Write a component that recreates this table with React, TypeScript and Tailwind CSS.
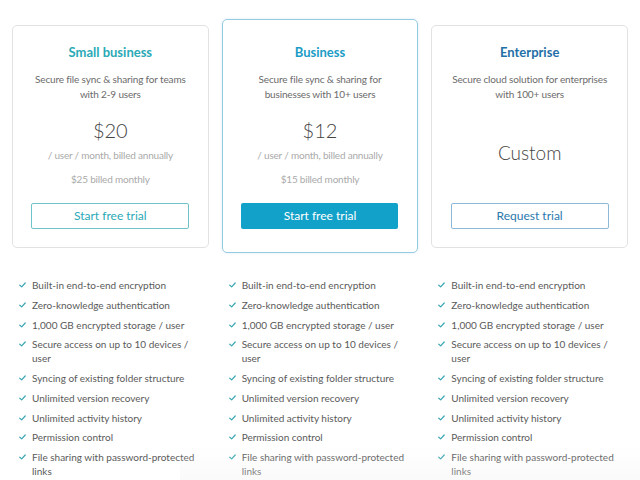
import React from "react";

const features = [
  "Built-in end-to-end encryption",
  "Zero-knowledge authentication",
  "1,000 GB encrypted storage / user",
  "Secure access on up to 10 devices / user",
  "Syncing of existing folder structure",
  "Unlimited version recovery",
  "Unlimited activity history",
  "Permission control",
  "File sharing with password-protected links",
];

function Check() {
  return (
    <svg width="7" height="6" viewBox="0 0 7 6" className="shrink-0 mt-[4px]">
      <path d="M0.8 3.2 L2.7 4.9 L6.2 1" fill="none" stroke="#3aa6b0" strokeWidth="1.2" strokeLinecap="round" strokeLinejoin="round" />
    </svg>
  );
}

function FeatureList() {
  return (
    <ul className="flex flex-col gap-[5.75px] pl-[7px]">
      {features.map((f) => (
        <li key={f} className="flex items-start gap-[6px] text-[10px] leading-[14px] text-[#5a5a5a]">
          <Check />
          <span className="w-[166px]">{f}</span>
        </li>
      ))}
    </ul>
  );
}

export default function App() {
  return (
    <div
      className="relative w-[640px] h-[480px] bg-white overflow-hidden"
      style={{ fontFamily: "Lato, 'Open Sans', sans-serif" }}
    >
      <div className="grid grid-cols-3 gap-[13px] px-[12px] pt-[19px]">
        {/* Small business */}
        <div className="mt-[6px] mb-[5px] border border-[#e2e2e2] rounded-[5px] flex flex-col items-center pt-[18px] pb-[18px] px-[8px]">
          <div className="text-[13px] leading-[16px] font-bold text-[#2aa9b6]">Small business</div>
          <div className="mt-[12px] text-[10px] tracking-[-0.15px] leading-[15px] text-[#6b6b6b] text-center whitespace-nowrap">
            Secure file sync &amp; sharing for teams<br />with 2-9 users
          </div>
          <div className="mt-[16px] text-[20px] leading-[24px] font-light text-[#444]">$20</div>
          <div className="mt-[6px] text-[10px] tracking-[-0.2px] leading-[14px] text-[#aaa] whitespace-nowrap">/ user / month, billed annually</div>
          <div className="mt-[10px] text-[10px] tracking-[-0.2px] leading-[14px] text-[#aaa]">$25 billed monthly</div>
          <button className="mt-[17px] w-[158px] h-[26px] border border-[#71c3cb] rounded-[2px] text-[12px] text-[#2aa9b6]">
            Start free trial
          </button>
        </div>

        {/* Business */}
        <div className="border border-[#93cbe3] rounded-[5px] flex flex-col items-center pt-[24px] pb-[23px] px-[8px] shadow-[0_0_3px_rgba(120,180,210,0.25)]">
          <div className="text-[13px] leading-[16px] font-bold text-[#1a9cc6]">Business</div>
          <div className="mt-[12px] text-[10px] tracking-[-0.15px] leading-[15px] text-[#6b6b6b] text-center whitespace-nowrap">
            Secure file sync &amp; sharing for<br />businesses with 10+ users
          </div>
          <div className="mt-[16px] text-[20px] leading-[24px] font-light text-[#444]">$12</div>
          <div className="mt-[6px] text-[10px] tracking-[-0.2px] leading-[14px] text-[#aaa] whitespace-nowrap">/ user / month, billed annually</div>
          <div className="mt-[10px] text-[10px] tracking-[-0.2px] leading-[14px] text-[#aaa]">$15 billed monthly</div>
          <button className="mt-[17px] w-[157px] h-[26px] bg-[#12a1c9] rounded-[2px] text-[12px] text-white">
            Start free trial
          </button>
        </div>

        {/* Enterprise */}
        <div className="mt-[6px] mb-[5px] border border-[#e2e2e2] rounded-[5px] flex flex-col items-center pt-[18px] pb-[18px] px-[8px]">
          <div className="text-[13px] leading-[16px] font-bold text-[#1f70a8]">Enterprise</div>
          <div className="mt-[12px] text-[10px] tracking-[-0.15px] leading-[15px] text-[#6b6b6b] text-center whitespace-nowrap">
            Secure cloud solution for enterprises<br />with 100+ users
          </div>
          <div className="flex-1 flex items-center">
            <div className="text-[19px] leading-[24px] font-light text-[#444]">Custom</div>
          </div>
          <button className="w-[158px] h-[26px] border border-[#8fb8d6] rounded-[2px] text-[12px] text-[#2a78ad]">
            Request trial
          </button>
        </div>
      </div>

      <div className="grid grid-cols-3 gap-[13px] px-[12px] mt-[25px]">
        <FeatureList />
        <FeatureList />
        <FeatureList />
      </div>

      <div className="absolute left-[180px] right-0 top-[446px] bottom-0 bg-gradient-to-b from-[rgba(240,240,240,0)] to-[rgba(240,240,240,0.35)] pointer-events-none" />
    </div>
  );
}
